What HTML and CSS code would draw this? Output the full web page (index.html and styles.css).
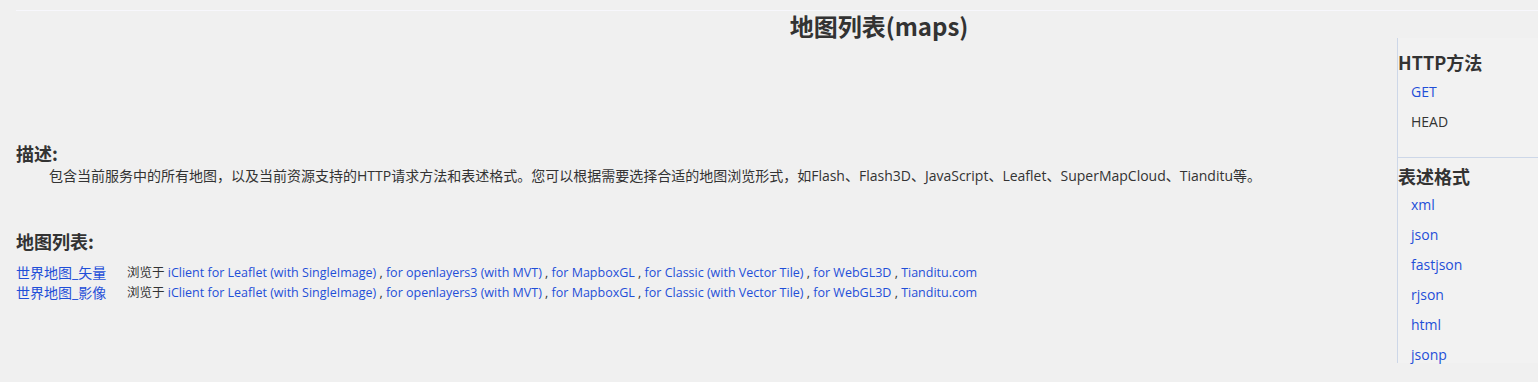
FILE: index.html
```html
<!DOCTYPE html>
<html lang="zh-CN">
<head>
<meta charset="utf-8">
<title>地图列表(maps)</title>
<link rel="stylesheet" href="styles.css">
</head>
<body>
<div class="topline"></div>
<header class="header"><h1 class="title">地图列表(maps)</h1></header>
<div class="layout">
  <main class="main">
    <h2 class="heading desc-heading">描述:</h2>
    <p class="desc">包含当前服务中的所有地图，以及当前资源支持的HTTP请求方法和表述格式。您可以根据需要选择合适的地图浏览形式，如Flash、Flash3D、JavaScript、Leaflet、SuperMapCloud、Tianditu等。</p>
    <h2 class="heading list-heading">地图列表:</h2>
    <div class="maps">
      <div class="map-row">
        <a class="map-name" href="#">世界地图_矢量</a>
        <span class="browse">浏览于 <a href="#">iClient for Leaflet (with SingleImage)</a> , <a href="#">for openlayers3 (with MVT)</a> , <a href="#">for MapboxGL</a> , <a href="#">for Classic (with Vector Tile)</a> , <a href="#">for WebGL3D</a> , <a href="#">Tianditu.com</a></span>
      </div>
      <div class="map-row">
        <a class="map-name" href="#">世界地图_影像</a>
        <span class="browse">浏览于 <a href="#">iClient for Leaflet (with SingleImage)</a> , <a href="#">for openlayers3 (with MVT)</a> , <a href="#">for MapboxGL</a> , <a href="#">for Classic (with Vector Tile)</a> , <a href="#">for WebGL3D</a> , <a href="#">Tianditu.com</a></span>
      </div>
    </div>
  </main>
  <aside class="side">
    <section class="side-sec methods">
      <h3 class="side-heading">HTTP方法</h3>
      <ul class="side-list">
        <li><a href="#">GET</a></li>
        <li class="plain">HEAD</li>
      </ul>
    </section>
    <section class="side-sec formats">
      <h3 class="side-heading">表述格式</h3>
      <ul class="side-list">
        <li><a href="#">xml</a></li>
        <li><a href="#">json</a></li>
        <li><a href="#">fastjson</a></li>
        <li><a href="#">rjson</a></li>
        <li><a href="#">html</a></li>
        <li><a href="#">jsonp</a></li>
      </ul>
    </section>
  </aside>
</div>
</body>
</html>
```
FILE: styles.css
```css
* { box-sizing: border-box; }
html, body { margin: 0; padding: 0; }
body {
  background: #f0f0f0;
  color: #333;
  font-family: "Open Sans", "Noto Sans CJK SC", sans-serif;
  font-size: 14px;
  height: 382px;
  overflow: hidden;
}
a { color: #1f4fd8; text-decoration: none; }
.topline {
  height: 1px;
  margin: 10px 0 0 16px;
  background: #f7f7fc;
}
.header {
  height: 27px;
  padding-left: 220px;
}
.title {
  margin: 0;
  text-align: center;
  font-size: 24px;
  font-weight: bold;
  line-height: 30px;
  font-family: "Noto Sans CJK SC", sans-serif;
}
.layout {
  display: flex;
  align-items: flex-start;
}
.main {
  flex: 1;
  padding-left: 16px;
}
.heading {
  margin: 0;
  font-size: 18px;
  font-weight: bold;
  line-height: 22px;
  font-family: "Noto Sans CJK SC", sans-serif;
}
.desc-heading { margin-top: 104px; }
.desc {
  margin: 2px 0 0;
  line-height: 20px;
  text-indent: 33px;
}
.list-heading { margin-top: 44px; }
.maps { margin-top: 11px; }
.map-row {
  display: flex;
  line-height: 20px;
}
.map-name {
  width: 111px;
  flex: none;
}
.browse { font-size: 12.5px; }
.side {
  width: 141px;
  flex: none;
  height: 325px;
  border-left: 1px solid #cdd7e8;
  background: #f2f2f2;
}
.side-sec.methods {
  padding: 12px 0 20px;
  border-bottom: 1px solid #cdd7e8;
}
.side-sec.formats { padding-top: 6px; }
.side-heading {
  margin: 0;
  font-size: 18px;
  font-weight: bold;
  line-height: 24px;
  font-family: "Noto Sans CJK SC", sans-serif;
}
.methods .side-heading { margin-bottom: 3px; }
.formats .side-heading { margin-bottom: 2px; }
.side-list {
  list-style: none;
  margin: 0;
  padding: 0 0 0 13px;
}
.side-list li {
  line-height: 30px;
  font-size: 14px;
}
.side-list .plain { color: #333; }
```
